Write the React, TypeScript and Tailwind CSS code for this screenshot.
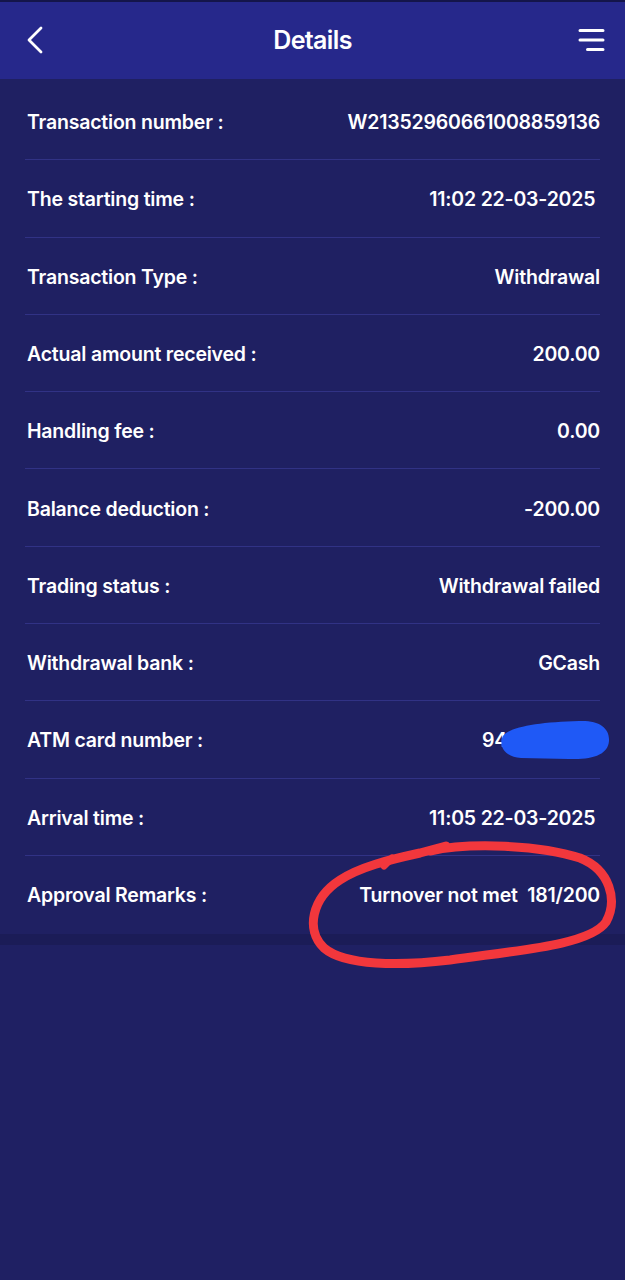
import { Fragment } from 'react';

const rows: [string, string][] = [
  ['Transaction number', 'W21352960661008859136'],
  ['The starting time', '11:02 22-03-2025 '],
  ['Transaction Type', 'Withdrawal'],
  ['Actual amount received', '200.00'],
  ['Handling fee', '0.00'],
  ['Balance deduction', '-200.00'],
  ['Trading status', 'Withdrawal failed'],
  ['Withdrawal bank', 'GCash'],
  ['ATM card number', '94'],
  ['Arrival time', '11:05 22-03-2025 '],
  ['Approval Remarks', 'Turnover not met  181/200'],
];

function App() {
  return (
    <div
      className="min-h-[1280px] bg-[#1f2063] text-white"
      style={{ fontFamily: 'Inter, "Liberation Sans", sans-serif' }}
    >
      <header className="relative h-[79px] border-t-2 border-[#14154a] bg-[#26288b] flex items-center justify-center">
        <svg
          className="absolute left-[26px] top-[23px]"
          width="18"
          height="30"
          viewBox="0 0 18 30"
          fill="none"
          stroke="white"
          strokeWidth="2.8"
          strokeLinecap="round"
          strokeLinejoin="round"
        >
          <path d="M15 3 L3 15 L15 27" />
        </svg>
        <h1 className="text-[25px] font-semibold tracking-tight">Details</h1>
        <svg
          className="absolute right-[20px] top-[26px]"
          width="27"
          height="24"
          viewBox="0 0 27 24"
          stroke="white"
          strokeWidth="3"
          strokeLinecap="round"
        >
          <path d="M2 2.5 H25 M2 12 H25 M9.5 21.5 H25" />
        </svg>
      </header>

      <div className="bg-[#1f2062] px-[25px] pt-[4px] pb-[2px]">
        {rows.map(([label, value], i) => (
          <Fragment key={label}>
            {i > 0 && <div className="h-px bg-[#313285]" />}
            <div className="relative h-[76.3px] pt-[3px] flex items-center justify-between text-[19.5px] font-semibold tracking-[-0.2px]">
              <span className="pl-[2px] whitespace-pre">{label} :</span>
              {label === 'ATM card number' ? (
                <span className="relative w-[118px] text-left">
                  {value}
                  <svg
                    className="absolute left-[14px] top-1/2 -translate-y-1/2"
                    width="120"
                    height="50"
                    viewBox="497 716 120 50"
                  >
                    <path
                      d="M504 736 C510 727 540 722 580 721 C600 720 611 728 610 741 C609 754 595 760 570 759 L522 758 C506 757 499 746 504 736 Z"
                      fill="#1f59f6"
                    />
                  </svg>
                </span>
              ) : (
                <span className="whitespace-pre">{value}</span>
              )}
              {label === 'Approval Remarks' && (
                <svg
                  className="absolute right-[-25px] top-[-26px]"
                  width="325"
                  height="150"
                  viewBox="300 830 325 150"
                  fill="none"
                  stroke="#f2373c"
                  strokeWidth="9"
                  strokeLinecap="round"
                  strokeLinejoin="round"
                >
                  <path d="M430 851 C470 842 540 845 580 858 C610 870 618 900 606 922 C590 945 520 950 450 960 C400 966 345 966 324 948 C305 930 312 898 340 880 C360 867 388 860 420 853 L446 846" />
                  <path d="M384 866 L392 858" strokeWidth="7" />
                </svg>
              )}
            </div>
          </Fragment>
        ))}
      </div>
      <div className="h-[11px] bg-[#1b1c57]" />
    </div>
  );
}

export default App;
